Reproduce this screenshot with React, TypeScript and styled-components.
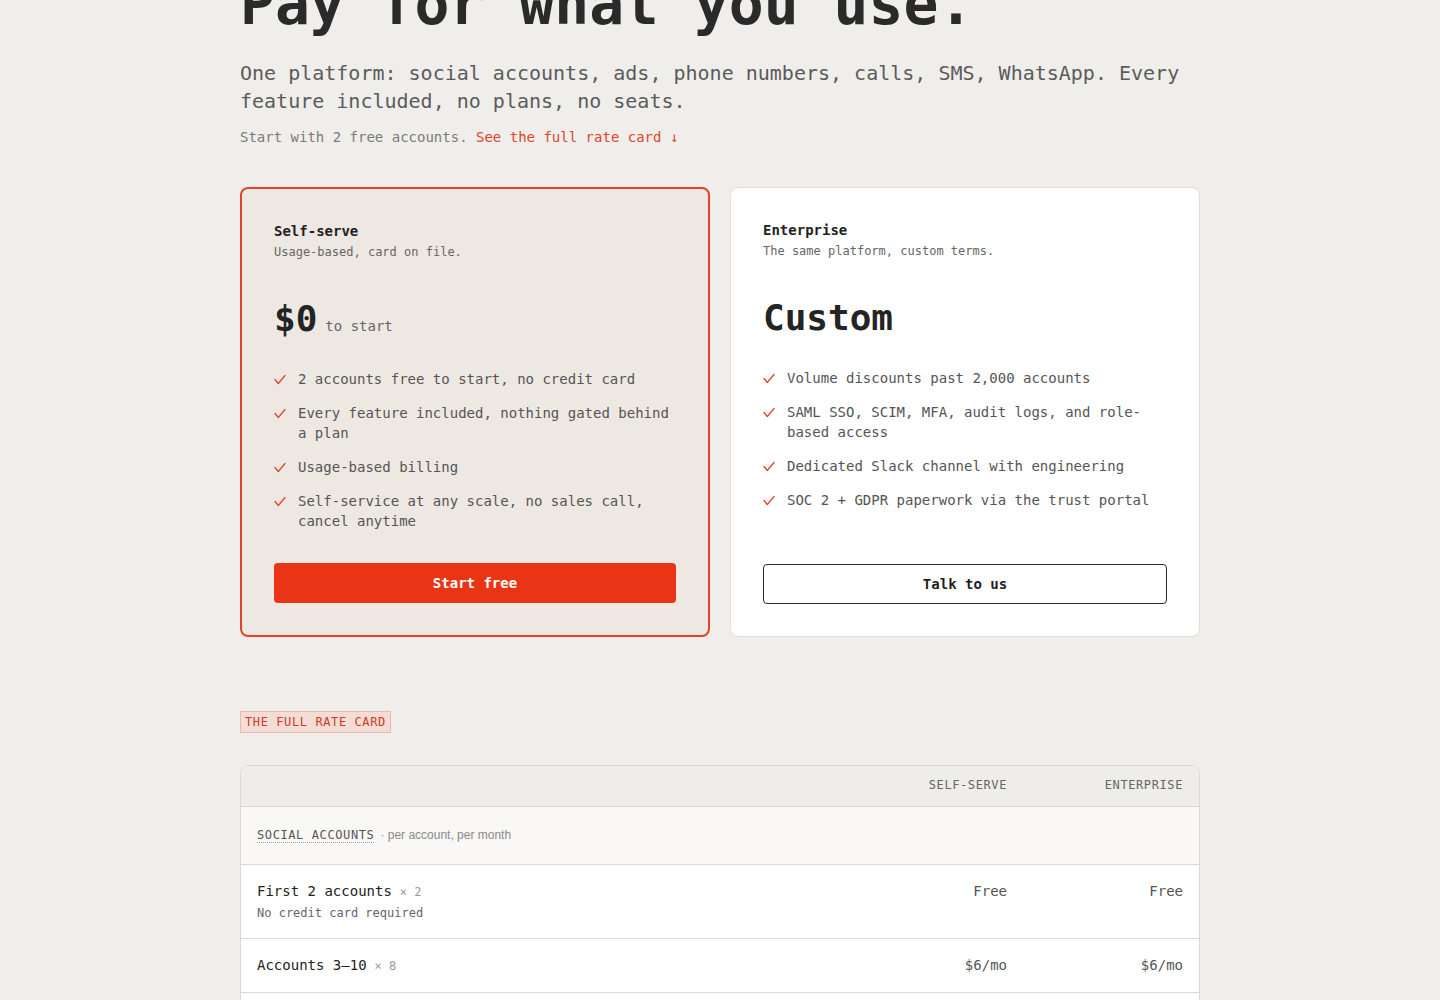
import styled, { createGlobalStyle } from 'styled-components';

const GlobalStyle = createGlobalStyle`
  * { box-sizing: border-box; }
  body {
    margin: 0;
    background: #f0eeeb;
    font-family: "DejaVu Sans Mono", "Liberation Mono", monospace;
    color: #222;
  }
`;

const Page = styled.main`
  width: 960px;
  margin: -27px auto 0;
  padding-bottom: 80px;
`;

const Title = styled.h1`
  margin: 0;
  font-size: 58px;
  line-height: 1.1;
  font-weight: 700;
  color: #2a2a2a;
`;

const Lead = styled.p`
  margin: 22px 0 0;
  font-size: 20px;
  line-height: 28px;
  color: #5b5b5b;
`;

const Note = styled.p`
  margin: 12px 0 0;
  font-size: 14px;
  line-height: 20px;
  color: #7a7a7a;

  a {
    color: #e0452a;
    text-decoration: none;
  }
`;

const Plans = styled.section`
  display: grid;
  grid-template-columns: 1fr 1fr;
  gap: 20px;
  margin-top: 40px;
`;

const PlanCard = styled.div<{ $featured?: boolean }>`
  display: flex;
  flex-direction: column;
  padding: 32px;
  border-radius: 8px;
  background: ${(p) => (p.$featured ? '#eee8e3' : '#ffffff')};
  border: ${(p) => (p.$featured ? '2px solid #e0452a' : '1px solid #e2dfda')};
`;

const PlanName = styled.h3`
  margin: 0;
  font-size: 14px;
  line-height: 20px;
  font-weight: 700;
  color: #222;
`;

const PlanBlurb = styled.p`
  margin: 2px 0 0;
  font-size: 12px;
  line-height: 18px;
  color: #666;
`;

const Price = styled.div`
  margin-top: 36px;
  height: 44px;
  display: flex;
  align-items: baseline;
  gap: 8px;
`;

const Amount = styled.span`
  font-size: 36px;
  line-height: 44px;
  font-weight: 700;
  color: #242424;
`;

const Per = styled.span`
  font-size: 14px;
  line-height: 20px;
  color: #666;
`;

const Features = styled.ul`
  list-style: none;
  margin: 28px 0 0;
  padding: 0;
  display: flex;
  flex-direction: column;
  gap: 14px;
`;

const Feature = styled.li`
  display: flex;
  gap: 12px;
  font-size: 14px;
  line-height: 20px;
  color: #555;
`;

const Tick = styled.svg`
  flex: none;
  width: 12px;
  height: 12px;
  margin-top: 5px;
  color: #e0452a;
`;

const PlanButton = styled.button<{ $primary?: boolean }>`
  height: 40px;
  width: 100%;
  border-radius: 4px;
  font-family: inherit;
  font-size: 14px;
  font-weight: 700;
  cursor: pointer;
  background: ${(p) => (p.$primary ? '#ea3416' : '#ffffff')};
  color: ${(p) => (p.$primary ? '#ffffff' : '#1e1e1e')};
  border: ${(p) => (p.$primary ? 'none' : '1px solid #2a2a2a')};
`;

const ButtonSlot = styled.div`
  margin-top: auto;
  padding-top: 32px;
`;

const Eyebrow = styled.span`
  display: inline-block;
  margin-top: 74px;
  padding: 2px 4px;
  font-size: 12px;
  line-height: 16px;
  letter-spacing: 0.05em;
  color: #cf3a20;
  background: #f3ddd6;
  border: 1px solid #eab9ad;
`;

const RateTable = styled.div`
  margin-top: 32px;
  border: 1px solid #dcd9d4;
  border-radius: 8px;
  overflow: hidden;
  background: #ffffff;
`;

const Row = styled.div<{ $tone?: 'head' | 'section' }>`
  display: grid;
  grid-template-columns: 1fr 176px 176px;
  align-items: start;
  padding: ${(p) => (p.$tone === 'head' ? '11px 0 13px' : p.$tone === 'section' ? '17px 0 19px' : '16px 0')};
  background: ${(p) =>
    p.$tone === 'head' ? '#efedea' : p.$tone === 'section' ? '#f9f8f6' : '#ffffff'};
  border-top: 1px solid #dcd9d4;

  &:first-child {
    border-top: none;
  }
`;

const HeadCell = styled.div`
  padding: 0 16px;
  text-align: right;
  font-size: 12px;
  line-height: 16px;
  letter-spacing: 0.05em;
  color: #666;
`;

const SectionLabel = styled.div`
  grid-column: 1 / -1;
  padding: 0 16px;
  line-height: 20px;
`;

const SectionName = styled.span`
  font-size: 12px;
  letter-spacing: 0.05em;
  color: #555;
  border-bottom: 1px dotted #999;
`;

const SectionHint = styled.span`
  margin-left: 6px;
  font-family: "Liberation Sans", Arial, sans-serif;
  font-size: 12px;
  color: #8a8a8a;
`;

const ItemCell = styled.div`
  padding: 0 16px;
`;

const ItemName = styled.div`
  font-size: 14px;
  line-height: 20px;
  color: #222;
`;

const Qty = styled.span`
  margin-left: 8px;
  font-size: 12px;
  color: #999;
`;

const ItemNote = styled.div`
  margin-top: 2px;
  font-size: 12px;
  line-height: 18px;
  color: #666;
`;

const ValueCell = styled.div`
  padding: 0 16px;
  text-align: right;
  font-size: 14px;
  line-height: 20px;
  color: #555;
`;

const selfServe = [
  '2 accounts free to start, no credit card',
  'Every feature included, nothing gated behind a plan',
  'Usage-based billing',
  'Self-service at any scale, no sales call, cancel anytime',
];

const enterprise = [
  'Volume discounts past 2,000 accounts',
  'SAML SSO, SCIM, MFA, audit logs, and role-based access',
  'Dedicated Slack channel with engineering',
  'SOC 2 + GDPR paperwork via the trust portal',
];

const accountRates = [
  { name: 'First 2 accounts', qty: '× 2', note: 'No credit card required', self: 'Free', ent: 'Free' },
  { name: 'Accounts 3–10', qty: '× 8', self: '$6/mo', ent: '$6/mo' },
  { name: 'Accounts 11–100', qty: '× 90', self: '$4/mo', ent: '$4/mo' },
  { name: 'Accounts 101–2,000', qty: '× 1,900', self: '$2/mo', ent: '$2/mo' },
];

const FeatureList = ({ items }: { items: string[] }) => (
  <Features>
    {items.map((item) => (
      <Feature key={item}>
        <Tick viewBox="0 0 12 12" fill="none" stroke="currentColor" strokeWidth={1.3} strokeLinecap="round" strokeLinejoin="round">
          <path d="M1 5.5 4.3 9.5 11 1.5" />
        </Tick>
        <span>{item}</span>
      </Feature>
    ))}
  </Features>
);

export default function App() {
  return (
    <>
      <GlobalStyle />
      <Page>
        <Title>Pay for what you use.</Title>
        <Lead>
          One platform: social accounts, ads, phone numbers, calls, SMS, WhatsApp. Every feature
          included, no plans, no seats.
        </Lead>
        <Note>
          Start with 2 free accounts. <a href="#rates">See the full rate card ↓</a>
        </Note>

        <Plans>
          <PlanCard $featured>
            <PlanName>Self-serve</PlanName>
            <PlanBlurb>Usage-based, card on file.</PlanBlurb>
            <Price>
              <Amount>$0</Amount>
              <Per>to start</Per>
            </Price>
            <FeatureList items={selfServe} />
            <ButtonSlot>
              <PlanButton $primary>Start free</PlanButton>
            </ButtonSlot>
          </PlanCard>

          <PlanCard>
            <PlanName>Enterprise</PlanName>
            <PlanBlurb>The same platform, custom terms.</PlanBlurb>
            <Price>
              <Amount>Custom</Amount>
            </Price>
            <FeatureList items={enterprise} />
            <ButtonSlot>
              <PlanButton>Talk to us</PlanButton>
            </ButtonSlot>
          </PlanCard>
        </Plans>

        <Eyebrow id="rates">THE FULL RATE CARD</Eyebrow>

        <RateTable>
          <Row $tone="head">
            <div />
            <HeadCell>SELF-SERVE</HeadCell>
            <HeadCell>ENTERPRISE</HeadCell>
          </Row>
          <Row $tone="section">
            <SectionLabel>
              <SectionName>SOCIAL ACCOUNTS</SectionName>
              <SectionHint>· per account, per month</SectionHint>
            </SectionLabel>
          </Row>
          {accountRates.map((r) => (
            <Row key={r.name}>
              <ItemCell>
                <ItemName>
                  {r.name}
                  <Qty>{r.qty}</Qty>
                </ItemName>
                {r.note && <ItemNote>{r.note}</ItemNote>}
              </ItemCell>
              <ValueCell>{r.self}</ValueCell>
              <ValueCell>{r.ent}</ValueCell>
            </Row>
          ))}
        </RateTable>
      </Page>
    </>
  );
}
